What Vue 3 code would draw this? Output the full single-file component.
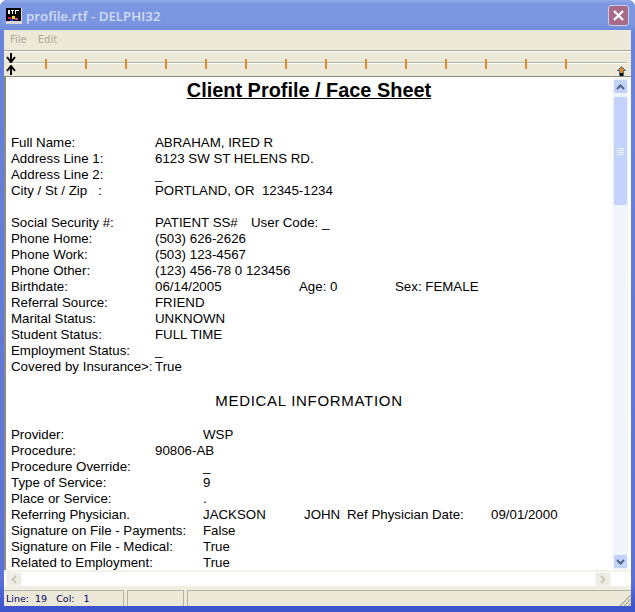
<script setup>
const ticks = Array.from({ length: 14 }, (_, i) => i)

const patientRows = [
  { label: 'Full Name:', value: 'ABRAHAM, IRED R' },
  { label: 'Address Line 1:', value: '6123 SW ST HELENS RD.' },
  { label: 'Address Line 2:', value: '_' },
  { label: 'City / St / Zip   :', value: 'PORTLAND, OR  12345-1234' },
  { label: '', value: '' },
  { label: 'Social Security #:', value: 'PATIENT SS#', code: 'User Code: _' },
  { label: 'Phone Home:', value: '(503) 626-2626' },
  { label: 'Phone Work:', value: '(503) 123-4567' },
  { label: 'Phone Other:', value: '(123) 456-78 0 123456' },
  { label: 'Birthdate:', value: '06/14/2005', age: 'Age: 0', sex: 'Sex: FEMALE' },
  { label: 'Referral Source:', value: 'FRIEND' },
  { label: 'Marital Status:', value: 'UNKNOWN' },
  { label: 'Student Status:', value: 'FULL TIME' },
  { label: 'Employment Status:', value: '_' },
  { label: 'Covered by Insurance>:', value: 'True' }
]

const medicalRows = [
  { label: 'Provider:', value: 'WSP' },
  { label: 'Procedure:', value: '90806-AB', short: true },
  { label: 'Procedure Override:', value: '_' },
  { label: 'Type of Service:', value: '9' },
  { label: 'Place or Service:', value: '.' },
  { label: 'Referring Physician.', value: 'JACKSON', first: 'JOHN', date: '09/01/2000' },
  { label: 'Signature on File - Payments:', value: 'False' },
  { label: 'Signature on File - Medical:', value: 'True' },
  { label: 'Related to Employment:', value: 'True' }
]
</script>

<template>
  <div class="window">
    <header class="titlebar">
      <svg class="app-icon" width="16" height="16" viewBox="0 0 16 16">
        <rect width="16" height="16" fill="#000" />
        <rect x="0" y="13" width="16" height="3" fill="#d8d8d8" />
        <rect x="15" y="0" width="1" height="16" fill="#d8d8d8" />
        <rect x="2" y="2" width="2" height="4" fill="#fff" />
        <rect x="5" y="2" width="3" height="1" fill="#fff" />
        <rect x="6" y="3" width="1" height="3" fill="#fff" />
        <rect x="9" y="2" width="4" height="1" fill="#fff" />
        <rect x="9" y="3" width="1" height="3" fill="#fff" />
        <rect x="2" y="9" width="3" height="2" fill="#e02020" />
        <rect x="4" y="11" width="3" height="2" fill="#2030d0" />
        <rect x="6" y="8" width="3" height="3" fill="#e8d820" />
        <rect x="9" y="10" width="3" height="2" fill="#d040a0" />
      </svg>
      <span class="title-text">profile.rtf - DELPHI32</span>
      <button class="close-btn">
        <svg width="13" height="13" viewBox="0 0 13 13">
          <path d="M2 2 L11 11 M11 2 L2 11" stroke="#fff" stroke-width="2.4" />
        </svg>
      </button>
    </header>

    <div class="body">
      <nav class="menubar">
        <span>File</span>
        <span>Edit</span>
      </nav>

      <div class="ruler">
        <div class="ruler-track">
          <i v-for="t in ticks" :key="t" class="tick"></i>
        </div>
        <div class="margins">
          <svg width="10" height="10" viewBox="0 0 10 10">
            <path d="M5 0 V8 M1 4 L5 9 L9 4" fill="none" stroke="#000" stroke-width="2" />
          </svg>
          <svg width="10" height="10" viewBox="0 0 10 10">
            <path d="M5 10 V2 M1 6 L5 1 L9 6" fill="none" stroke="#000" stroke-width="2" />
          </svg>
        </div>
        <svg class="ruler-end" width="9" height="10" viewBox="0 0 9 10">
          <path d="M4.5 0.5 L8.5 4.5 H6.5 V9.5 H2.5 V4.5 H0.5 Z" fill="#e88a20" stroke="#39698f" stroke-width="1" />
          <rect x="3" y="7" width="3" height="3" fill="#000" />
        </svg>
      </div>

      <div class="middle">
        <main class="doc">
          <h1 class="doc-title">Client Profile / Face Sheet</h1>

          <section class="patient">
            <div v-for="(r, i) in patientRows" :key="i" class="row">
              <span class="label">{{ r.label }}</span>
              <span class="val" :class="{ 'w96': r.code, 'w144': r.age }">{{ r.value }}</span>
              <span v-if="r.code">{{ r.code }}</span>
              <span v-if="r.age" class="w96">{{ r.age }}</span>
              <span v-if="r.sex">{{ r.sex }}</span>
            </div>
          </section>

          <h2 class="doc-heading">MEDICAL INFORMATION</h2>

          <section class="medical">
            <div v-for="(r, i) in medicalRows" :key="i" class="row">
              <span class="label" :class="{ short: r.short }">{{ r.label }}</span>
              <span class="val" :class="{ 'w101': r.first }">{{ r.value }}</span>
              <template v-if="r.first">
                <span class="w43">{{ r.first }}</span>
                <span class="w144">Ref Physician Date:</span>
                <span>{{ r.date }}</span>
              </template>
            </div>
          </section>
        </main>

        <div class="vscroll">
          <div class="sb-btn">
            <svg width="9" height="6" viewBox="0 0 9 6">
              <path d="M1 5 L4.5 1.5 L8 5" fill="none" stroke="#4d6185" stroke-width="2" />
            </svg>
          </div>
          <div class="thumb">
            <i></i><i></i><i></i><i></i>
          </div>
          <div class="sb-rest"></div>
          <div class="sb-btn">
            <svg width="9" height="6" viewBox="0 0 9 6">
              <path d="M1 1 L4.5 4.5 L8 1" fill="none" stroke="#4d6185" stroke-width="2" />
            </svg>
          </div>
        </div>
      </div>

      <div class="hscroll">
        <div class="hs-btn">
          <svg width="6" height="9" viewBox="0 0 6 9">
            <path d="M5 1 L1.5 4.5 L5 8" fill="none" stroke="#c9c7ba" stroke-width="2" />
          </svg>
        </div>
        <div class="hs-track"></div>
        <div class="hs-btn">
          <svg width="6" height="9" viewBox="0 0 6 9">
            <path d="M1 1 L4.5 4.5 L1 8" fill="none" stroke="#c9c7ba" stroke-width="2" />
          </svg>
        </div>
      </div>

      <footer class="statusbar">
        <div class="panel pos">Line:&nbsp; 19&nbsp;&nbsp; Col:&nbsp;&nbsp; 1</div>
        <div class="panel mid"></div>
        <div class="panel rest"></div>
        <svg class="grip" width="12" height="12" viewBox="0 0 12 12">
          <path d="M1 12 L12 1 M5 12 L12 5 M9 12 L12 9" stroke="#aca899" stroke-width="1.2" />
        </svg>
      </footer>
    </div>
  </div>
</template>

<style>
html, body {
  margin: 0;
  background: #fff;
}
</style>

<style scoped>
.window {
  width: 635px;
  height: 612px;
  display: flex;
  flex-direction: column;
  background: linear-gradient(#6a84dc, #5a72d8 580px, #3f55cc 606px);
  border-radius: 7px 7px 0 0;
  overflow: hidden;
  font-family: "Liberation Sans", Arial, sans-serif;
}

.titlebar {
  height: 30px;
  flex: none;
  box-sizing: border-box;
  display: flex;
  align-items: center;
  padding: 1px 6px 0;
  background: linear-gradient(#93a9ea 0, #7b97e2 4px, #7a96e0 24px, #708bda 30px);
}

.app-icon {
  flex: none;
}

.title-text {
  margin-left: 4px;
  font-family: "Open Sans", sans-serif;
  font-size: 13.3px;
  font-weight: 600;
  color: #d3dcf6;
}

.close-btn {
  margin-left: auto;
  width: 21px;
  height: 21px;
  padding: 0;
  display: flex;
  align-items: center;
  justify-content: center;
  background: #a96a8a;
  border: 1px solid #c9cfe8;
  border-radius: 3px;
}

.body {
  flex: 1;
  min-height: 0;
  margin: 0 4px 6px;
  display: flex;
  flex-direction: column;
  background: #ece9d8;
}

.menubar {
  height: 21px;
  flex: none;
  box-sizing: border-box;
  display: flex;
  gap: 11px;
  align-items: center;
  padding: 0 0 2px 6px;
  font-family: "DejaVu Sans", sans-serif;
  font-size: 10px;
  color: #aca899;
  border-bottom: 1px solid #aca899;
}

.ruler {
  height: 26px;
  flex: none;
  box-sizing: border-box;
  border-top: 1px solid #fff;
  border-bottom: 1px solid #8e8c7c;
  position: relative;
}

.margins {
  position: absolute;
  left: 2px;
  top: 0;
  width: 11px;
  display: flex;
  flex-direction: column;
  gap: 2px;
  padding-top: 1px;
}

.ruler-track {
  margin: 10px 4px 0;
  height: 1px;
  background: #b5b3a3;
  box-shadow: 0 1px 0 #fff;
  padding-left: 37px;
  display: flex;
  gap: 38px;
}

.tick {
  width: 2px;
  height: 10px;
  margin-top: -3px;
  flex: none;
  background: #e08a2c;
}

.ruler-end {
  position: absolute;
  right: 5px;
  top: 14px;
}

.middle {
  flex: 1;
  min-height: 0;
  display: flex;
  border-left: 2px solid #8e8c7c;
  background: #fff;
}

.doc {
  flex: 1;
  min-width: 0;
  overflow: hidden;
  font-size: 13.3px;
  line-height: 16px;
  color: #000;
  padding: 0 5px;
}

.doc-title {
  margin: 2px 0 33px;
  font-size: 19.9px;
  line-height: 23px;
  font-weight: 700;
  text-align: center;
  text-decoration: underline;
}

.doc-heading {
  margin: 16px 0;
  font-size: 15px;
  line-height: 20px;
  font-weight: 400;
  letter-spacing: 0.7px;
  text-align: center;
}

.row {
  display: flex;
  height: 16px;
  white-space: pre;
}

.label {
  flex: none;
}

.patient .label {
  width: 144px;
}

.medical .label {
  width: 192px;
}

.medical .label.short {
  width: 144px;
}

.w43 {
  width: 43px;
}

.w96 {
  width: 96px;
}

.w101 {
  width: 101px;
}

.w144 {
  width: 144px;
}

.vscroll {
  width: 15px;
  flex: none;
  margin: 0 3px 0 1px;
  padding: 2px 0 1px;
  display: flex;
  flex-direction: column;
  background: #f3f5fd;
}

.sb-btn {
  height: 15px;
  flex: none;
  box-sizing: border-box;
  display: flex;
  align-items: center;
  justify-content: center;
  background: #c2d2fb;
  border: 1px solid #eef2fe;
  border-radius: 2px;
}

.thumb {
  margin-top: 2px;
  height: 110px;
  flex: none;
  box-sizing: border-box;
  display: flex;
  flex-direction: column;
  align-items: center;
  justify-content: center;
  gap: 1px;
  background: #c4d3fc;
  border: 1px solid #eef2fe;
  border-radius: 2px;
}

.thumb i {
  width: 7px;
  height: 1px;
  background: #eef2fe;
}

.sb-rest {
  flex: 1;
}

.hscroll {
  height: 20px;
  flex: none;
  box-sizing: border-box;
  display: flex;
  align-items: center;
  padding: 0 20px 0 2px;
  background: #fff;
  border-top: 2px solid #f3f1e8;
  border-bottom: 4px solid #f0eee2;
}

.hs-btn {
  width: 16px;
  height: 14px;
  flex: none;
  box-sizing: border-box;
  display: flex;
  align-items: center;
  justify-content: center;
  background: #eeede5;
  border: 1px solid #f6f5ef;
  border-radius: 2px;
}

.hs-track {
  flex: 1;
}

.statusbar {
  height: 16px;
  flex: none;
  display: flex;
  gap: 3px;
  position: relative;
  font-family: "DejaVu Sans", sans-serif;
  font-size: 9.5px;
  color: #000060;
}

.panel {
  box-sizing: border-box;
  border-top: 1px solid #b5b3a3;
  border-left: 1px solid #b5b3a3;
  border-right: 1px solid #b5b3a3;
  line-height: 15px;
  padding-left: 2px;
}

.pos {
  width: 120px;
  border-left: none;
}

.mid {
  width: 57px;
}

.rest {
  flex: 1;
  border-right: none;
}

.grip {
  position: absolute;
  right: 0;
  bottom: 0;
}
</style>
